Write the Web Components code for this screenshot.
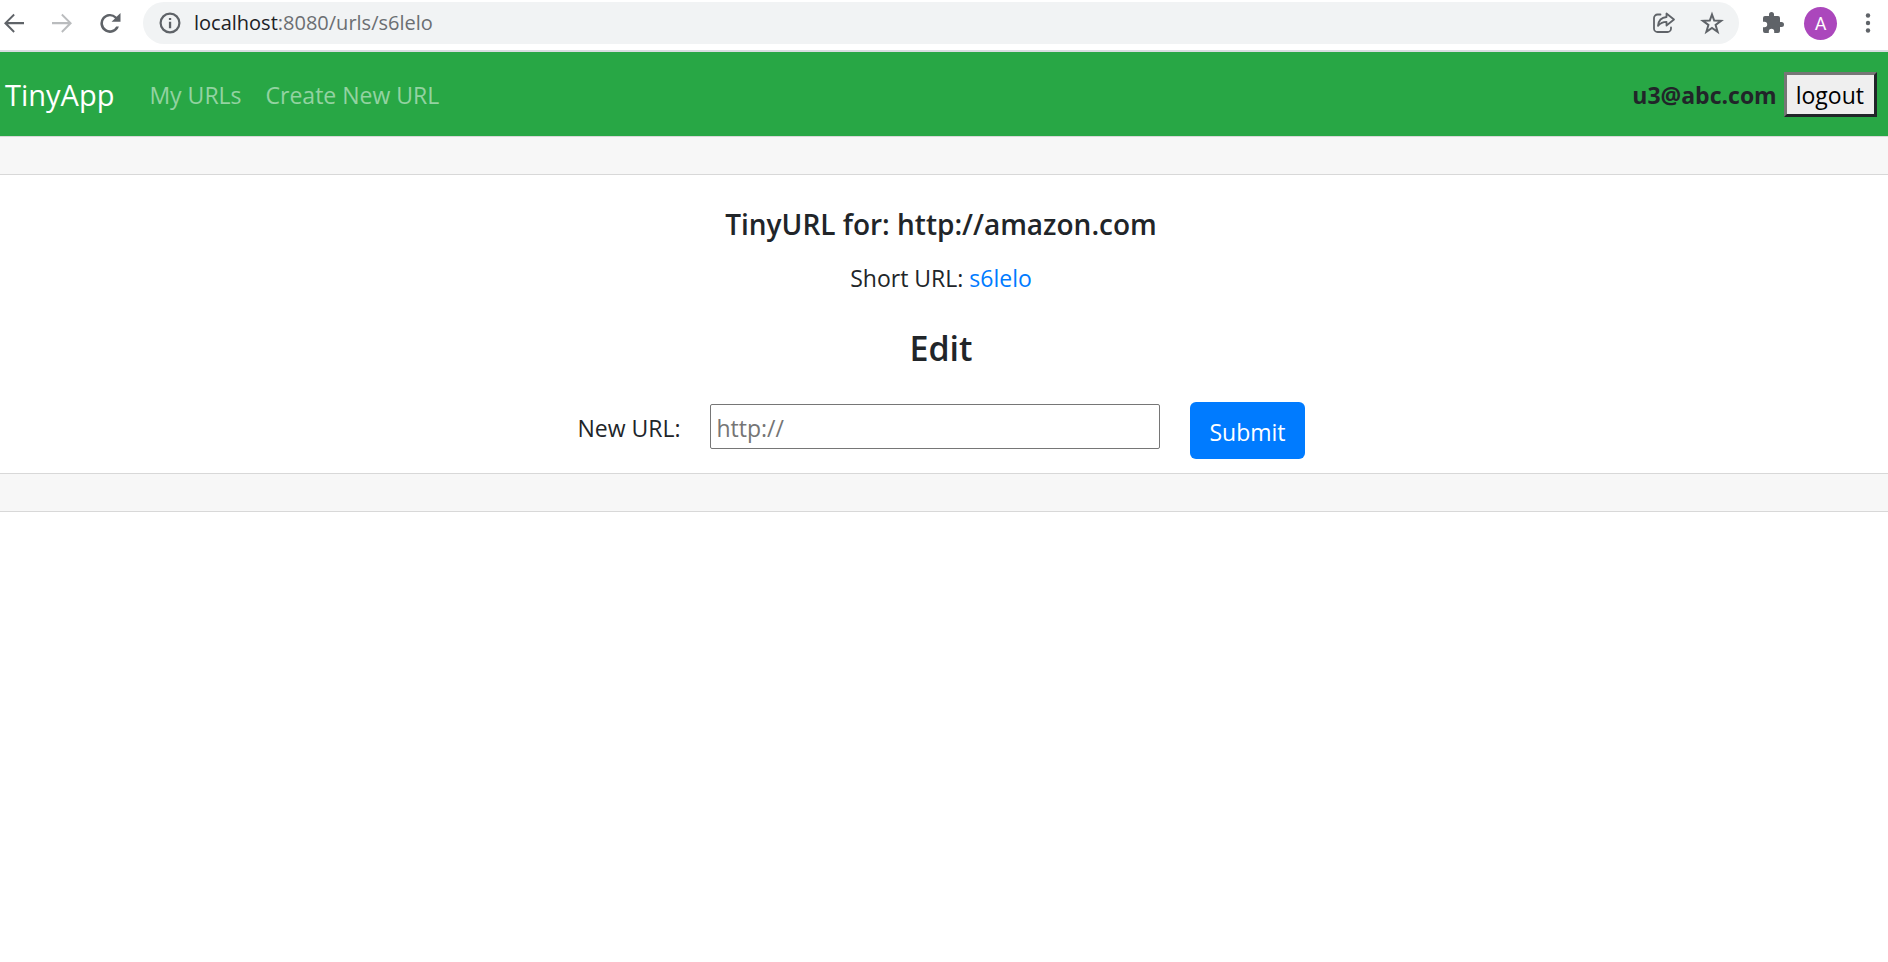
<!DOCTYPE html>
<html lang="en">
<head>
<meta charset="utf-8">
<title>TinyApp</title>
<style>
  body { margin: 0; background: #fff; color: #212529; font: 23px/36px "Open Sans", "Noto Sans", sans-serif; }
</style>
</head>
<body>
<browser-bar></browser-bar>
<app-navbar user="u3@abc.com">
  <nav-link href="/urls">My URLs</nav-link>
  <nav-link href="/urls/new">Create New URL</nav-link>
</app-navbar>
<grey-band></grey-band>
<url-card long="http://amazon.com" short="s6lelo">
  <edit-form></edit-form>
</url-card>
<grey-band></grey-band>

<script>
const define = (name, html, setup) => customElements.define(name, class extends HTMLElement {
  connectedCallback() {
    if (this.shadowRoot) return;
    const t = document.createElement('template');
    t.innerHTML = html;
    this.attachShadow({ mode: 'open' }).append(t.content.cloneNode(true));
    if (setup) setup(this, this.shadowRoot);
  }
});

define('browser-bar', `
<style>
  :host { display: flex; align-items: center; height: 46px; padding: 0 8px 4px 2px; border-bottom: 2px solid #d9dce0; color: #5f6368; }
  button { display: block; padding: 0; border: 0; background: none; color: inherit; flex: none; height: 24px; }
  svg { display: block; width: 24px; height: 24px; fill: currentColor; }
  .nav { display: flex; gap: 24px; margin-right: 21px; }
  .off { color: #babcbe; }
  .pill { flex: 1; display: flex; align-items: center; height: 42px; padding: 0 15px; border-radius: 21px; background: #f1f3f4; min-width: 0; }
  .url { flex: 1; margin-left: 12px; font-size: 20px; line-height: 28px; color: #6b6e72; }
  .url b { font-weight: 400; color: #202124; }
  .acts { display: flex; gap: 24px; }
  .tools { display: flex; align-items: center; margin-left: 22px; gap: 19px; }
  .avatar { width: 33px; height: 33px; border-radius: 50%; background: #ab47bc; color: #fff; font: 18px/33px Roboto, sans-serif; }
</style>
<div class="nav">
  <button aria-label="Back"><svg viewBox="0 0 24 24"><path d="M22 11H6l6.800-6.800L11.500 2.700 2 12.200l9.500 9.500 1.300-1.500L6 13.300h16z"/></svg></button>
  <button class="off" aria-label="Forward"><svg viewBox="0 0 24 24"><path d="M2 11h16l-6.800-6.800 1.300-1.500 9.500 9.500-9.500 9.500-1.300-1.500L18 13.300H2z"/></svg></button>
  <button aria-label="Reload"><svg viewBox="0 0 24 24"><path d="M18.600 5.700A9.500 9.500 0 1 0 20.900 15.500H18.200a7 7 0 1 1-1.200-8.100L13.500 10.800H22.500V2z"/></svg></button>
</div>
<div class="pill">
  <button aria-label="Site information"><svg viewBox="0 0 24 24"><circle cx="12" cy="12" r="9.400" fill="none" stroke="currentColor" stroke-width="2.200"/><path d="M10.900 10.800h2.300v6.400h-2.300zM10.900 6.900h2.300v2.200h-2.300z"/></svg></button>
  <span class="url"><b>localhost</b>:8080/urls/s6lelo</span>
  <div class="acts">
    <button aria-label="Share"><svg viewBox="0 0 24 24" style="fill:none;stroke:currentColor;stroke-width:1.800;stroke-linejoin:round;stroke-linecap:round"><path d="M8.500 3.500H5.500A3.500 3.500 0 0 0 2 7V17.500A3.500 3.500 0 0 0 5.500 21H15.500a3.500 3.500 0 0 0 3.500-3.500V16.500M14.500 2.500V6C9.500 6.500 6.500 9.500 6 14.800c2.500-3 5-4 8.500-4V14.500L22 8.500z"/></svg></button>
    <button aria-label="Bookmark"><svg viewBox="0 0 24 24" style="fill:none;stroke:currentColor;stroke-width:2"><path d="M12 3.500l2.200 6.100 6.900.2-5.500 4.200 2 6.800-5.600-3.900-5.600 3.900 2-6.800-5.500-4.200 6.900-.2z"/></svg></button>
  </div>
</div>
<div class="tools">
  <button aria-label="Extensions"><svg viewBox="0 0 24 24"><path d="M20.500 11H19V7a2 2 0 0 0-2-2h-4V3.500a2.500 2.500 0 0 0-5 0V5H4a2 2 0 0 0-2 2v3.800h1.500a2.700 2.700 0 0 1 0 5.400H2V20a2 2 0 0 0 2 2h3.800v-1.500a2.700 2.700 0 0 1 5.400 0V22H17a2 2 0 0 0 2-2v-4h1.500a2.500 2.500 0 0 0 0-5z"/></svg></button>
  <button class="avatar" aria-label="Profile">A</button>
  <button aria-label="Menu"><svg viewBox="0 0 24 24"><circle cx="12" cy="4.500" r="2.200"/><circle cx="12" cy="12" r="2.200"/><circle cx="12" cy="19.500" r="2.200"/></svg></button>
</div>`);

define('app-navbar', `
<style>
  :host { display: flex; align-items: center; box-sizing: border-box; height: 84px; padding: 1px 11px 0 5px; background: #28a745; }
  .brand { margin-right: 35px; color: #fff; text-decoration: none; font-size: 29px; }
  nav { flex: 1; display: flex; gap: 24px; }
  strong { margin-right: 7px; font-weight: 700; }
  button { box-sizing: border-box; height: 45px; padding: 0 10px 0 9px; border: 3px solid; border-color: #767676 #212529 #212529 #767676; background: #efefef; color: #000; font: inherit; line-height: 36px; }
</style>
<a class="brand" href="/">TinyApp</a>
<nav><slot></slot></nav>
<strong></strong>
<button type="submit">logout</button>`, (el, root) => {
  root.querySelector('strong').textContent = el.getAttribute('user');
});

define('nav-link', `
<style>
  :host { display: block; }
  a { color: rgba(255, 255, 255, .5); text-decoration: none; }
</style>
<a><slot></slot></a>`, (el, root) => {
  root.querySelector('a').href = el.getAttribute('href');
});

define('grey-band', `
<style>
  :host { display: block; height: 37px; background: #f7f7f7; border: solid #d8d8d8; border-width: 1px 0; }
</style>`);

define('url-card', `
<style>
  :host { display: block; padding: 29px 6px 14px 0; text-align: center; }
  h1, h2, p { margin: 0; }
  h1 { font-size: 28px; font-weight: 600; line-height: 40px; }
  p { margin-top: 16px; }
  h2 { margin-top: 28px; font-size: 34px; font-weight: 600; line-height: 48px; }
  a { color: #007bff; text-decoration: none; }
</style>
<h1>TinyURL for: <span></span></h1>
<p>Short URL: <a></a></p>
<h2>Edit</h2>
<slot></slot>`, (el, root) => {
  root.querySelector('span').textContent = el.getAttribute('long');
  const a = root.querySelector('a');
  a.textContent = el.getAttribute('short');
  a.href = '/u/' + el.getAttribute('short');
});

define('edit-form', `
<style>
  :host { display: block; margin-top: 30px; }
  form { display: flex; justify-content: center; align-items: flex-start; gap: 30px; }
  label { margin-top: 8px; }
  input { box-sizing: border-box; width: 450px; height: 45px; margin-top: 2px; padding: 3px 5px 0; border: 1px solid #767676; border-radius: 2px; font: inherit; }
  input::placeholder { color: #757575; }
  button { height: 57px; padding: 3px 19px 0; border: 0; border-radius: 6px; background: #007bff; color: #fff; font: inherit; }
</style>
<form>
  <label for="longURL">New URL:</label>
  <input id="longURL" type="text" name="longURL" placeholder="http://">
  <button type="submit">Submit</button>
</form>`);
</script>
</body>
</html>
